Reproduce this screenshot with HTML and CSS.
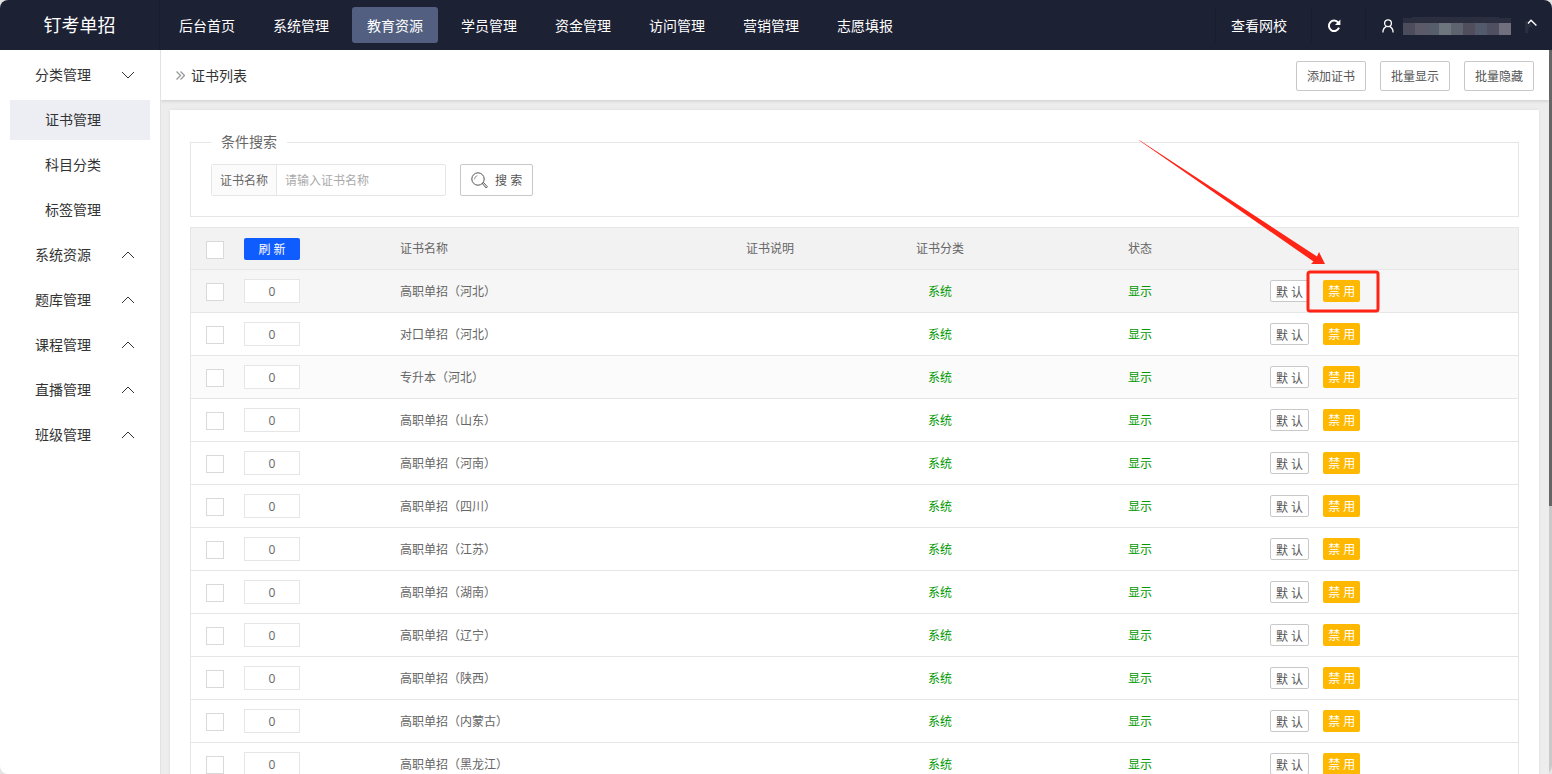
FILE: index.html
```html
<!DOCTYPE html>
<html lang="zh-CN">
<head>
<meta charset="utf-8">
<title>证书列表</title>
<link rel="stylesheet" href="styles.css">
</head>
<body>
<div class="app">
  <header class="topbar">
    <div class="logo">钉考单招</div>
    <nav class="nav">
      <a href="#">后台首页</a>
      <a href="#">系统管理</a>
      <a href="#" class="active">教育资源</a>
      <a href="#">学员管理</a>
      <a href="#">资金管理</a>
      <a href="#">访问管理</a>
      <a href="#">营销管理</a>
      <a href="#">志愿填报</a>
    </nav>
    <div class="tools">
      <a href="#" class="tool">查看网校</a>
      <button class="tool" aria-label="刷新">
        <svg width="14" height="14" viewBox="0 0 14 14" fill="none" stroke="#fff" stroke-width="2"><path d="M11.2 3.6A5.2 5.2 0 1 0 12 8.6"/><path d="M13.4 0.6V6H8Z" fill="#fff" stroke="none"/></svg>
      </button>
      <button class="tool user" aria-label="账号">
        <svg width="12" height="14" viewBox="0 0 12 14" fill="none" stroke="#fff" stroke-width="1.3"><circle cx="6" cy="4.2" r="3.4"/><path d="M0.9 13.4C0.9 10.4 2.4 8.4 4.4 7.4M11.1 13.4C11.1 10.4 9.6 8.4 7.6 7.4"/></svg>
        <svg class="mask" width="108" height="18" viewBox="0 0 108 18" shape-rendering="crispEdges"><path fill="#2a2e3e" d="M0 1H9V0H96V1H108V6H0Z"/><path fill="#4b4d5d" d="M0 6h12v12H0z"/><path fill="#5c5968" d="M12 6h12v12H12z"/><path fill="#565d6b" d="M24 6h12v12H24z"/><path fill="#6d757d" d="M36 6h12v12H36z"/><path fill="#5d6470" d="M48 6h12v12H48z"/><path fill="#504e5d" d="M60 6h12v12H60z"/><path fill="#535a6c" d="M72 6h12v12H72z"/><path fill="#4e4f60" d="M84 6h12v12H84z"/><path fill="#716f7d" d="M96 6h12v12H96z"/></svg>
        <svg class="caret" width="12" height="14" viewBox="0 0 12 14" fill="none"><path fill="#2a2e3e" d="M0 2H4L8 8H4L3 14H0Z"/><path stroke="#fff" stroke-width="1.4" d="M3 4.4L6 1.2L11.400 6.400"/></svg>
      </button>
    </div>
  </header>
  <div class="body">
    <aside class="side">
      <a href="#" class="item">分类管理<svg width="14" height="8" viewBox="0 0 14 8"><path d="M1 1L7 7L13 1"/></svg></a>
      <a href="#" class="sub active">证书管理</a>
      <a href="#" class="sub">科目分类</a>
      <a href="#" class="sub">标签管理</a>
      <a href="#" class="item">系统资源<svg width="14" height="8" viewBox="0 0 14 8"><path d="M1 7L7 1L13 7"/></svg></a>
      <a href="#" class="item">题库管理<svg width="14" height="8" viewBox="0 0 14 8"><path d="M1 7L7 1L13 7"/></svg></a>
      <a href="#" class="item">课程管理<svg width="14" height="8" viewBox="0 0 14 8"><path d="M1 7L7 1L13 7"/></svg></a>
      <a href="#" class="item">直播管理<svg width="14" height="8" viewBox="0 0 14 8"><path d="M1 7L7 1L13 7"/></svg></a>
      <a href="#" class="item">班级管理<svg width="14" height="8" viewBox="0 0 14 8"><path d="M1 7L7 1L13 7"/></svg></a>
    </aside>
    <main class="main">
      <div class="crumb">
        <svg width="9" height="9" viewBox="0 0 9 9" fill="none" stroke="#999" stroke-width="1.3"><path d="M0.5 0.5L4.5 4.5L0.5 8.5M4.5 0.5L8.5 4.5L4.5 8.5"/></svg>
        <h1>证书列表</h1>
        <div class="actions">
          <button class="btn">添加证书</button>
          <button class="btn">批量显示</button>
          <button class="btn">批量隐藏</button>
        </div>
      </div>
      <section class="card">
        <fieldset class="search">
          <legend>条件搜索</legend>
          <div class="group">
            <label for="name">证书名称</label>
            <input id="name" type="text" placeholder="请输入证书名称">
          </div>
          <button class="btn find">
            <svg width="17" height="17" viewBox="0 0 17 17" fill="none" stroke="#555"><circle cx="7" cy="7" r="6.2"/><path d="M3.6 7.4A3.5 3.5 0 0 1 6.4 3.6" stroke="#999"/><path d="M11.4 11.6L12.6 10.6L16.4 14.8L15.2 16Z"/></svg>
            <span>搜 索</span>
          </button>
        </fieldset>
        <table class="list">
          <colgroup><col class="c-check"><col class="c-sort"><col class="c-name"><col class="c-desc"><col class="c-desc"><col class="c-state"><col></colgroup>
          <thead>
            <tr>
              <th><input type="checkbox" aria-label="全选"></th>
              <th><button class="refresh">刷 新</button></th>
              <th>证书名称</th>
              <th class="mid">证书说明</th>
              <th class="mid">证书分类</th>
              <th class="mid">状态</th>
              <th></th>
            </tr>
          </thead>
          <tbody id="rows"></tbody>
        </table>
      </section>
    </main>
    <div class="scroll"><div class="thumb"></div></div>
  </div>
</div>
<script src="rows.js"></script>
</body>
</html>
```
FILE: styles.css
```css
* { box-sizing: border-box; }
body {
  margin: 0;
  background: #e4e4e4;
  color: #666;
  font: 12px/20px "Open Sans", "Noto Sans CJK SC", sans-serif;
}
button, input { font: inherit; color: inherit; margin: 0; }
button { cursor: pointer; }
a { color: inherit; text-decoration: none; }
.app {
  display: flex;
  flex-direction: column;
  height: 100vh;
  overflow: hidden;
  border-radius: 8px;
  background: #fff;
}
.topbar {
  display: flex;
  flex: none;
  height: 50px;
  background: #1d2134;
  color: #fff;
  font-size: 14px;
}
.logo {
  width: 160px;
  border-right: 1px solid #191c2c;
  font-size: 18px;
  line-height: 50px;
  text-align: center;
}
.nav { display: flex; flex: 1; align-items: center; gap: 8px; padding: 0 4px; }
.nav a {
  width: 86px;
  height: 36px;
  border-radius: 3px;
  line-height: 38px;
  text-align: center;
}
.nav .active { background: #525f80; }
.tools { display: flex; align-items: center; }
.tool {
  display: flex;
  align-items: center;
  height: 34px;
  padding: 2px 24px 0 15px;
  border: 0;
  border-left: 1px solid #191c2c;
  background: none;
}
.tool.user { padding: 2px 15px 0 16px; }
.mask { margin: 0 14px 0 9px; }
.body { display: flex; flex: 1; min-height: 0; }
.side {
  display: flex;
  flex: none;
  flex-direction: column;
  gap: 5px;
  width: 161px;
  padding: 5px 10px 0 10px;
  border-right: 1px solid #e2e2e2;
  color: #333;
  font-size: 14px;
  line-height: 40px;
}
.item { display: flex; align-items: center; justify-content: space-between; padding: 0 15px 0 25px; }
.item svg { fill: none; stroke: #333; }
.sub { padding-left: 35px; }
.sub.active { background: #edeef3; }
.main {
  display: flex;
  flex: 1;
  flex-direction: column;
  min-width: 0;
  overflow: hidden;
  background: #ededed;
}
.crumb {
  display: flex;
  flex: none;
  align-items: center;
  height: 50px;
  padding: 1px 15px 0;
  background: #fff;
  box-shadow: 0 1px 3px rgba(0, 0, 0, .15);
}
.crumb h1 { flex: 1; margin: 0 0 0 6px; color: #333; font-size: 14px; font-weight: 400; }
.actions { display: flex; gap: 14px; }
.btn {
  height: 30px;
  padding: 2px 10px 0;
  border: 1px solid #c9c9c9;
  border-radius: 2px;
  background: #fff;
  color: #555;
}
.card {
  flex: none;
  margin: 10px 10px 0 9px;
  padding: 22px 20px 0;
  background: #fff;
  box-shadow: 0 0 3px rgba(0, 0, 0, .08);
}
.search {
  display: flex;
  gap: 14px;
  margin: 0 0 10px;
  padding: 12px 20px 20px;
  border: 1px solid #e6e6e6;
}
.search legend { padding: 0 10px; font-size: 14px; }
.group { display: flex; height: 32px; border: 1px solid #e6e6e6; border-radius: 2px; }
.group label { padding: 0 8px; border-right: 1px solid #e6e6e6; background: #fbfbfb; line-height: 32px; }
.group input { width: 168px; padding: 2px 8px 0; border: 0; outline: 0; background: none; }
.group input::placeholder { color: #aaa; }
.find { display: flex; align-items: center; gap: 7px; height: 32px; padding: 0 10px; }
.find span { padding-top: 2px; }
.list {
  width: 100%;
  border: 1px solid #e6e6e6;
  border-collapse: separate;
  border-spacing: 0;
  table-layout: fixed;
}
.c-check { width: 38px; }
.c-sort { width: 156px; }
.c-name { width: 300px; }
.c-desc { width: 170px; }
.c-state { width: 230px; }
.list th, .list td {
  height: 43px;
  padding: 0 15px;
  border-bottom: 1px solid #e6e6e6;
  font-weight: 400;
  text-align: left;
}
.list td:nth-child(3), .list .green { padding-top: 2px; }
.list th { height: 42px; background: #f2f2f2; }
.list .mid { text-align: center; }
.list .hover { background: #f6f6f6; }
.list .tint { background: #fbfbfb; }
.list .green { color: #090; }
.list input[type="checkbox"] {
  display: block;
  width: 18px;
  height: 18px;
  margin-top: 2px;
  border: 1px solid #d9d9d9;
  background: #fff;
  appearance: none;
}
.refresh {
  display: block;
  width: 56px;
  height: 22px;
  padding: 2px 0 0;
  border: 0;
  border-radius: 2px;
  background: #0f5cff;
  color: #fff;
}
.sort {
  display: block;
  width: 56px;
  height: 24px;
  padding: 0;
  border: 1px solid #e6e6e6;
  background: #fff;
  text-align: center;
}
.ops { display: flex; gap: 14px; }
.ops button {
  height: 22px;
  padding: 2px 5px 0;
  border: 0;
  border-radius: 2px;
  background: #ffb800;
  color: #fff;
  line-height: 20px;
}
.ops .default { border: 1px solid #c9c9c9; background: #fff; color: #555; }
.target { position: relative; display: flex; }
.mark { position: absolute; right: -20px; bottom: -11px; pointer-events: none; }
.scroll { flex: none; width: 3px; background: #c9c9c9; }
.thumb { height: 63%; background: #666; }
```
FILE: rows.js
```js
const names = ['高职单招（河北）', '对口单招（河北）', '专升本（河北）', '高职单招（山东）', '高职单招（河南）', '高职单招（四川）', '高职单招（江苏）', '高职单招（湖南）', '高职单招（辽宁）', '高职单招（陕西）', '高职单招（内蒙古）', '高职单招（黑龙江）'];
const tone = { 0: 'hover', 2: 'tint' };
const mark = '<svg class="mark" width="242" height="174" viewBox="1138 139 242 174"><path fill="#ff2415" d="M1138.500 140L1140 140.500L1317 256.500L1319 252L1325 264L1311 264L1313.500 261.500Z"/><rect x="1308" y="272" width="70" height="39" rx="2" fill="none" stroke="#ff2415" stroke-width="3"/></svg>';
document.getElementById('rows').innerHTML = names.map((name, i) => `
  <tr class="${tone[i] || ''}">
    <td><input type="checkbox" aria-label="${name}"></td>
    <td><input class="sort" type="text" value="0" aria-label="排序"></td>
    <td>${name}</td>
    <td></td>
    <td class="mid green">系统</td>
    <td class="mid green">显示</td>
    <td><div class="ops"><button class="default">默 认</button><span class="target"><button>禁 用</button>${i === 0 ? mark : ''}</span></div></td>
  </tr>`).join('');
```
